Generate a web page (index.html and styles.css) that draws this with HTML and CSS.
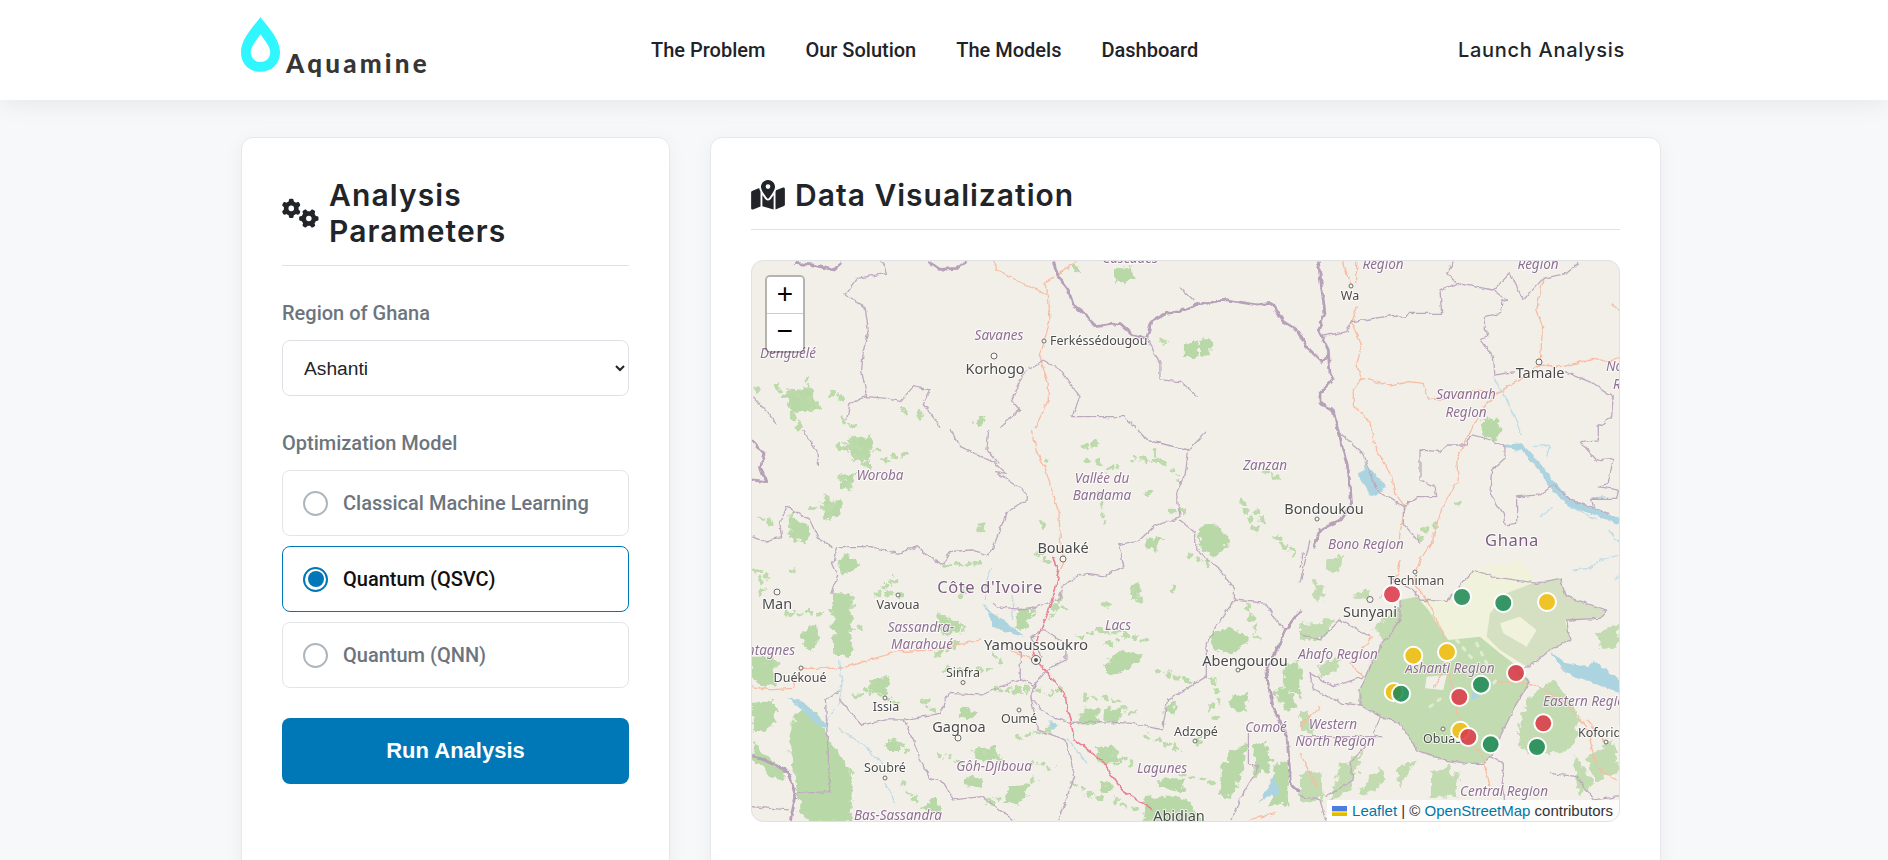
FILE: index.html
```html
<!DOCTYPE html>
<html lang="en">
<head>
<meta charset="utf-8">
<title>Aquamine</title>
<link rel="stylesheet" href="styles.css">
</head>
<body>
<header class="navbar">
  <a class="logo" href="#">
    <svg class="logo-drop" viewBox="0 0 42 58" aria-hidden="true"><path fill-rule="evenodd" d="M21 .3C27 9 41 22 41 36.5 41 48.5 32.5 56.5 21 56.5S1 48.5 1 36.5C1 22 15 9 21 .3ZM21 18C17 24 11 30.500 11 36.500 11 42 15 46.500 21 46.500S31 42 31 36.500C31 30.500 25 24 21 18Z"/></svg>
    <span class="logo-text">Aquamine</span>
  </a>
  <nav class="nav-links">
    <a href="#">The Problem</a>
    <a href="#">Our Solution</a>
    <a href="#">The Models</a>
    <a href="#">Dashboard</a>
  </nav>
  <a class="nav-cta" href="#">Launch Analysis</a>
</header>

<main class="layout">
  <section class="card">
    <h2 class="card-title">
      <svg class="icon-gears" viewBox="0 0 640 512" aria-hidden="true"><path d="M308.5 135.3c7.1-6.3 9.9-16.2 6.2-25c-2.3-5.3-4.8-10.5-7.6-15.5L304 89.4c-3-5-6.3-9.9-9.8-14.6c-5.7-7.6-15.7-10.1-24.7-7.1l-28.2 9.3c-10.7-8.8-23-16-36.2-20.9L199 27.1c-1.9-9.3-9.1-16.7-18.500-17.800C173.900 8.400 167.200 8 160.400 8h-.7c-6.800 0-13.500 .4-20.100 1.200c-9.400 1.100-16.600 8.600-18.500 17.800L115 56.100c-13.300 5-25.500 12.100-36.200 20.900L50.500 67.800c-9-3-19-.5-24.700 7.100c-3.500 4.700-6.800 9.600-9.900 14.600l-3 5.300c-2.800 5-5.300 10.200-7.600 15.600c-3.700 8.700-.9 18.600 6.200 25l22.200 19.800C32.600 161.900 32 168.900 32 176s.6 14.100 1.700 20.900L11.500 216.700c-7.100 6.300-9.900 16.200-6.200 25c2.300 5.300 4.800 10.500 7.600 15.600l3 5.200c3 5.100 6.300 9.900 9.900 14.600c5.700 7.600 15.700 10.100 24.700 7.100l28.200-9.300c10.700 8.800 23 16 36.200 20.900l6.100 29.100c1.900 9.300 9.100 16.700 18.500 17.800c6.700 .8 13.500 1.200 20.400 1.200s13.700-.4 20.400-1.200c9.400-1.100 16.600-8.600 18.500-17.800l6.100-29.100c13.300-5 25.500-12.100 36.200-20.900l28.200 9.300c9 3 19 .5 24.700-7.100c3.500-4.700 6.800-9.500 9.800-14.600l3.100-5.400c2.800-5 5.300-10.200 7.600-15.500c3.700-8.700 .9-18.600-6.200-25l-22.200-19.800c1.100-6.800 1.700-13.800 1.700-20.900s-.6-14.100-1.700-20.900l22.200-19.800zM112 176a48 48 0 1 1 96 0 48 48 0 1 1 -96 0zM504.700 500.500c6.300 7.100 16.200 9.900 25 6.200c5.300-2.300 10.500-4.800 15.500-7.600l5.400-3.100c5-3 9.900-6.300 14.600-9.800c7.600-5.700 10.100-15.700 7.100-24.700l-9.300-28.200c8.800-10.700 16-23 20.900-36.200l29.100-6.100c9.300-1.900 16.700-9.100 17.800-18.500c.8-6.700 1.200-13.500 1.200-20.400s-.4-13.700-1.200-20.400c-1.100-9.400-8.600-16.600-17.800-18.500L583.900 307c-5-13.300-12.100-25.500-20.900-36.200l9.300-28.200c3-9 .5-19-7.100-24.700c-4.700-3.500-9.600-6.800-14.600-9.900l-5.300-3c-5-2.800-10.200-5.300-15.600-7.600c-8.700-3.700-18.600-.9-25 6.200l-19.800 22.200c-6.800-1.100-13.800-1.700-20.900-1.700s-14.100 .6-20.900 1.700l-19.800-22.200c-6.300-7.100-16.200-9.900-25-6.200c-5.300 2.300-10.500 4.800-15.600 7.600l-5.200 3c-5.100 3-9.900 6.300-14.600 9.900c-7.600 5.700-10.100 15.700-7.100 24.700l9.300 28.200c-8.800 10.700-16 23-20.900 36.200L315.100 313c-9.300 1.900-16.700 9.100-17.800 18.500c-.8 6.700-1.200 13.500-1.200 20.400s.4 13.700 1.200 20.400c1.100 9.400 8.600 16.600 17.800 18.500l29.100 6.100c5 13.300 12.100 25.500 20.900 36.200l-9.300 28.200c-3 9-.5 19 7.100 24.700c4.700 3.500 9.500 6.800 14.600 9.800l5.400 3.100c5 2.800 10.200 5.300 15.500 7.600c8.700 3.700 18.600 .9 25-6.200l19.800-22.200c6.800 1.100 13.800 1.700 20.900 1.700s14.100-.6 20.900-1.700l19.800 22.200zM464 304a48 48 0 1 1 0 96 48 48 0 1 1 0-96z"/></svg>
      <span class="title-narrow">Analysis Parameters</span>
    </h2>

    <label class="field-label" for="region">Region of Ghana</label>
    <select class="field-select" id="region">
      <option>Ashanti</option>
      <option>Bono</option>
      <option>Eastern</option>
    </select>

    <p class="field-label field-label-model">Optimization Model</p>
    <div class="options">
      <div class="option"><span class="radio"></span>Classical Machine Learning</div>
      <div class="option option-active"><span class="radio"></span>Quantum (QSVC)</div>
      <div class="option"><span class="radio"></span>Quantum (QNN)</div>
    </div>

    <button class="run-button" type="button">Run Analysis</button>
  </section>

  <section class="card">
    <h2 class="card-title card-title-wide">
      <svg class="icon-map" viewBox="0 0 576 512" aria-hidden="true"><path d="M408 120c0 54.600-73.100 151.900-105.200 192c-7.700 9.600-22 9.600-29.600 0C241.100 271.900 168 174.600 168 120C168 53.700 221.700 0 288 0s120 53.700 120 120zm8 80.400c3.500-6.900 6.700-13.800 9.600-20.600c.5-1.200 1-2.500 1.500-3.700l116-46.400C558.900 123.400 576 135 576 152V422.800c0 9.800-6 18.600-15.100 22.300L416 503V200.400zM137.600 138.300c2.400 14.100 7.200 28.300 12.800 41.500c2.900 6.800 6.100 13.700 9.600 20.600V451.800L32.900 502.700C17.100 509 0 497.400 0 480.400V209.600c0-9.800 6-18.600 15.100-22.300l122.600-49zM327.800 332c13.900-17.400 35.700-45.700 56.200-77V504.300L192 449.400V255c20.500 31.300 42.300 59.600 56.200 77c20.500 25.600 59.100 25.600 79.600 0zM288 152a40 40 0 1 0 0-80 40 40 0 1 0 0 80z"/></svg>
      <span>Data Visualization</span>
    </h2>

    <div class="map">
      <svg class="map-canvas" viewBox="751 260 869 562" aria-label="Map of Ghana and Côte d'Ivoire">
        <defs>
          <filter id="rough" x="-5%" y="-5%" width="110%" height="110%" color-interpolation-filters="sRGB">
            <feTurbulence type="fractalNoise" baseFrequency=".045" numOctaves="3" seed="4"/>
            <feDisplacementMap in="SourceGraphic" scale="34" xChannelSelector="R" yChannelSelector="G"/>
          </filter>
          <filter id="wiggle" x="-5%" y="-5%" width="110%" height="110%" color-interpolation-filters="sRGB">
            <feTurbulence type="fractalNoise" baseFrequency=".05" numOctaves="2" seed="9"/>
            <feDisplacementMap in="SourceGraphic" scale="14" xChannelSelector="R" yChannelSelector="G"/>
          </filter>
        </defs>
        <g class="tiles">
          <!-- Côte d'Ivoire, central and south -->
          <g transform="translate(750 430) scale(.351 .3333)">
            <path class="forest" d="M232 490H290V672H240ZM115 900C120 860 150 830 175 840C210 860 215 900 228 935L290 1020V1180H160L135 1090 115 960ZM5 680H70V770L40 775 5 745ZM5 812H65L78 880 40 905 5 900ZM5 930L60 990 105 1020 95 1060 5 990ZM150 610L180 582 200 620 180 665 145 640ZM1390 950L1420 945 1405 1030 1370 1105 1335 1095 1350 1000ZM1430 945L1470 935 1485 1010 1440 1045ZM1165 1045L1240 1050 1230 1085 1165 1075ZM1310 620C1330 590 1390 590 1420 620L1390 670 1330 665ZM1290 290C1330 275 1365 310 1360 350L1320 380 1280 350ZM1010 700L1060 660 1120 680 1060 730 1020 735ZM1525 700L1568 690V800L1520 770ZM1495 790L1530 755 1558 830 1530 850ZM1365 800L1420 790 1410 850 1365 830ZM960 830L1000 835 990 880 930 880ZM1020 830L1060 840 1050 880 1005 870ZM640 960L700 945 720 1000 640 990ZM740 1075L800 1060 770 1120 720 1125ZM500 1120L530 1095 540 1150 480 1140ZM610 1045L660 1045 650 1070 605 1065ZM980 945L1040 950 1055 1000 1000 1000ZM380 940L440 935 425 960 390 960ZM110 260L170 285 160 340 115 330ZM270 370L310 400 280 435 250 420ZM530 550L590 570 600 610 540 610ZM760 545L810 530 790 600 760 590ZM1130 330L1180 320 1160 360 1125 355ZM345 745L400 745 385 790 340 775ZM1130 1100L1240 1100 1290 1180H1120ZM1190 820L1210 815 1210 850 1175 850ZM1080 470L1110 450 1110 505 1085 510ZM620 830L650 850 620 870 590 850ZM280 20L350 25 340 95 290 90ZM250 45L290 50 280 70ZM210 215L265 210 250 260 215 265ZM265 135L300 130 290 175 265 175ZM1500 1000L1540 1000 1530 1130 1480 1120ZM1000 1060H1030V1085H1000Z"/>
            <path class="speck" d="M280 30L340 110M300 20L300 90M250 50L370 60M380 90L450 70M260 140L300 180M180 230L260 220M220 200L230 270M120 250L110 310M950 50L990 40M1020 120L1050 110M1130 190L1150 210M1210 120L1230 170M1200 240L1240 240M1150 60L1170 110M1090 80L1190 100M300 800L350 760M340 780L420 820M520 840L480 800M430 500L380 480M550 560L620 600M590 640L520 680M720 700L680 660M700 780L830 780M850 790L900 770M880 500L900 550M860 560L880 500M1000 600L930 620M1020 640L1050 630M1090 480L1120 520M1200 480L1220 460M1010 520L1020 530M1320 750L1340 820M1310 830L1340 880M1130 920L1220 960M1300 900L1270 950M1090 1000L1020 970M950 800L1040 810M400 930L450 960M540 970L600 1000M640 960L720 990M760 920L860 900M780 1070L820 1040M920 1060L1000 1110M1060 830L1100 860M560 720L680 720M560 410L650 400M410 450L350 500M120 420L130 430M1400 210L1440 300M1250 370L1300 400M830 280L850 300M660 290L670 310M30 260L70 290M20 420L60 450M110 550L220 550M310 590L330 600M650 300L670 320M840 90L860 110M960 90L1000 100M1000 190L1010 280M820 370L860 400M600 500L640 470M700 560L720 600M1130 630L1000 600M1160 720L1260 760M1420 530L1450 640M1440 110L1500 140M1500 320L1560 380M1440 240L1470 290M40 700L80 700M30 450L35 500M1230 1030L1320 1060M430 1060L470 1110M1040 1110L1100 1140M800 1000L860 1010M680 1120L720 1100"/>
            <path class="road" d="M805 0L815 60 840 110 880 250 885 340 895 395 880 430M145 715L260 715 420 665 520 660 660 630M5 770L60 780 120 775 145 715M740 660L810 690M1420 1170L1500 1150M1190 1150L1230 1170"/>
            <path class="trunk" d="M862 380L880 430 860 520 805 660 815 690 895 790 925 930 1000 990 1060 1080 1150 1140"/>
            <path class="water" d="M660 518L690 550 735 580 780 620 748 612 690 590 680 548ZM105 800L150 815 215 880 255 815 270 800 230 850 220 895 190 885 145 835ZM1452 1120L1490 1040 1510 1090 1475 1100ZM850 870L880 885 860 900Z"/>
            <path class="river" d="M690 410L675 450 670 510M750 495L745 570M255 690L262 760 255 810M385 1055L395 1075 415 1120M250 895L330 950 400 1030M905 925L960 1000"/>
            <path class="admin" d="M570 0L600 50 700 100 730 130 700 125 790 190 790 210 730 250 690 360 680 375 630 360 570 365 550 405 510 380 480 350 420 370 345 350 250 350 235 400 250 435 230 495M680 0L675 60 710 100M5 320L40 335 90 320 85 280 105 230 170 270 195 325 235 350M1105 0L1130 30 1250 60 1300 5M1250 60L1240 130 1215 190 1225 260 1150 290 1110 330 1050 345 1065 410 1005 440 940 430 890 470 880 510 790 540 700 530 690 520M1225 270L1270 310 1270 360 1340 420 1380 480 1380 510 1470 520 1500 570 1525 600M1380 510L1340 570 1300 640 1300 740 1190 810 1175 900 1090 880 1000 875 920 880 870 865 830 840 800 800 810 765 770 745 660 795 565 790 540 850 440 870 390 870 320 885 255 810M800 800L820 900 900 930 925 1040 880 1170M1420 910L1420 1000 1450 1010 1400 1100 1370 1170M440 870L490 1000 510 1045 550 1055 580 1110 660 1100 750 1170M770 745L770 665 740 650M830 680L800 620 840 600 900 640 900 690 850 715 830 740 810 765M135 1090L228 1085 215 810 255 780M150 0L190 60 195 105M5 1130L110 1140"/>
            <path class="border" d="M5 30L40 70 30 110 45 155 5 150M5 980L40 990 110 1025 130 1100 115 1170M1525 600L1470 730 1490 830 1530 920 1540 1060 1568 1090M1525 600L1568 540"/>
          </g>

          <!-- Top left -->
          <g transform="translate(700 130) scale(.3333)">
            <path class="forest" d="M1240 415L1295 410 1305 450 1250 460ZM1455 640H1500V678H1455ZM1115 410L1145 400 1140 425 1120 432ZM830 860L855 860 845 890 825 880ZM250 790L340 770 350 830 280 850Z"/>
            <path class="speck" d="M320 745L330 840M230 770L290 860M270 780L360 830M280 860L300 900M170 770L180 790M430 870L470 890M390 790L420 800M610 840L620 850M660 850L665 870M1380 630L1395 645"/>
            <path class="road" d="M885 395L890 420 980 465 1045 495 1050 570 1020 680 1045 760 1045 810 1005 895M1045 495L1035 460 1130 395"/>
            <path class="admin" d="M545 395L560 430 470 445 435 495 495 530 505 600 490 660 485 720 500 800 450 820 440 870M500 800L560 805 600 815 640 770 690 780 670 820 720 890M160 800L230 880M1030 690L970 730 935 810 960 840 900 890M1030 690L1080 720 1140 800 1115 860 1270 860 1310 895M1440 470L1480 510M1340 625L1380 700 1380 750 1440 755 1490 800"/>
            <path class="border" d="M1060 395L1075 440 1105 480 1120 525 1165 560 1185 590 1260 580 1300 615 1340 625 1355 575 1400 550 1440 545 1500 520M285 400L340 405 400 420 425 400M685 395L720 418 770 415 800 395"/>
          </g>

          <!-- Top right -->
          <g transform="translate(1200 250) scale(.3333)">
            <path class="forest" d="M0 268H32L35 312 0 315ZM845 510L900 505 905 545 880 575 850 560ZM0 830L40 820 90 870 60 900H0Z"/>
            <path class="speck" d="M670 840L710 825M770 760L790 770M660 860L670 880"/>
            <path class="road" d="M430 35L450 105M470 35L470 100M470 170L455 220 485 285 470 345 485 385 575 408 625 395 670 400 685 445 710 450 830 420 890 430 950 395 1020 345 1090 350 1180 325 1225 335 1260 325M485 385L460 420 460 465 510 520 525 590 575 680 585 730 615 770 600 850 595 895M1020 345L1028 230 1010 180 1030 85M1235 160L1260 185M890 430L860 460 810 545 770 630 775 690 725 775 690 895"/>
            <path class="water" d="M905 585L965 580 1020 640 1060 690 1110 750 1170 770 1260 805V825L1170 790 1110 772 1050 715 1020 662 965 600 915 595ZM490 630L540 690 560 710 515 740 470 670 495 660Z"/>
            <path class="river" d="M1000 590L1050 585 1040 620M880 380L930 470 965 555M1060 770L1020 800M1115 770L1190 810M1170 745L1215 740M1225 840L1260 880"/>
            <path class="admin" d="M370 258L440 245 455 215 590 195 615 205 625 190 725 190 720 120 770 100 880 120 925 155 905 150 905 190 850 200 860 260 840 265 880 320 885 375 945 365M1030 85L970 150 945 100 930 70 880 120M1030 85L1100 70 1135 40M760 35L740 70 770 100M1095 365L1180 400 1240 440 1235 500 1195 530 1195 570 1140 575 1190 630 1240 625 1225 700 1195 710 1255 720 1250 745 1175 745 1180 770M415 545L490 610 530 720 610 770 650 740 710 740 705 710 660 690 660 600 720 605 740 585 800 585 815 555 860 565 915 590 915 625 875 660 870 730 910 790 915 825 950 820 950 740 1020 735 1060 705 1110 750 1170 770 1225 790M610 770L610 820 660 880"/>
            <path class="border" d="M0 165L70 148 170 165 215 160 250 215 290 240 320 290 365 335 385 315M355 35L375 190 355 240 385 300 390 370 400 390 360 430 360 460 400 480 415 545 445 660 455 760 420 810 360 840 340 895"/>
          </g>

          <!-- Ghana, Ashanti and Bono East -->
          <g transform="translate(1300 540) scale(.3333)">
            <path class="forest-pale" d="M350 170L440 180 520 90 660 60 710 130 780 115 800 170 920 210 900 235 800 240 810 300 750 330 690 380 650 385 540 290 445 300 430 280 385 210Z"/>
            <path class="forest-mid" d="M570 220L620 160 710 125 780 115 800 170 920 210 905 235 795 240 812 300 745 335 680 380 600 330 560 290ZM600 250L660 230 710 270 680 320 610 280Z" fill-rule="evenodd"/>
            <path class="forest-soft" d="M300 180L350 170 385 210 430 280 445 300 540 290 600 340 660 385 690 425 640 510 610 570 600 590 580 640 550 670 500 670 430 660 350 630 300 550 245 530 180 495 180 450 200 400 240 320 300 240ZM380 410L440 405 430 450 375 445Z" fill-rule="evenodd"/>
            <path class="forest-soft forest-irregular" d="M680 480L760 420 830 500 830 600 790 640 680 640 650 590ZM0 250L70 245 110 235 60 300 0 300ZM75 60L130 45 110 100 80 95ZM120 680L190 640 150 750 90 780ZM290 690L350 660 300 740ZM0 705L60 690 70 780 0 790ZM180 750L240 680 260 720 195 770ZM390 700L450 680 470 770 390 770ZM860 650L940 600 960 700 880 720ZM660 590L720 600 700 640 650 620ZM820 640L880 730 840 770ZM0 520L30 510 40 580 0 570ZM220 260L320 190 300 260 250 310ZM50 380L130 350 100 400 60 410ZM40 120L70 140 60 190 40 170ZM160 170L210 140 200 180ZM420 720L480 700 460 770ZM890 280L960 250 950 320 900 320Z"/>
            <path class="speck-light" d="M470 300L520 360M530 310L560 370M560 450L590 420M390 500L430 470"/>
            <path class="road" d="M400 0L360 60 340 130 380 180 430 280 445 390 475 520 500 600 545 640 570 740M300 60L295 100 240 175M215 290L200 310 150 370 190 410M60 500L0 560M0 640L50 740M590 425L700 432 800 490 860 560 890 680 950 720M400 440L430 400M920 610L860 540"/>
            <path class="water" d="M750 335L800 370 860 380 880 360 960 420V460L880 430 800 400ZM515 450L540 470 515 480Z"/>
            <path class="river" d="M820 90L870 85 900 60 960 45M945 120L960 105"/>
            <path class="admin" d="M30 0L0 130M0 85L10 40M260 110L340 150 360 180 440 185 520 90 580 110 710 130 780 115 800 170 920 210 900 235 800 240 810 300 750 330 690 380 640 385 690 425 640 510 610 570 600 590 580 640 550 670 500 670 430 660 350 630 300 550 245 530 180 495 180 450 200 400 240 320 300 240 300 180M210 290L120 240 60 300 0 280M190 410L100 440 30 400 40 450 130 490 180 495M240 530L220 590 150 670 160 720 80 770M0 590L250 590M0 770L60 780 80 850M570 650L610 670 610 780M830 710L880 780 960 770M750 700L830 710"/>
          </g>
        </g>

        <g class="labels">
          <text class="region" x="1130" y="263">Cascades</text>
          <text class="region" x="999" y="340">Savanes</text>
          <text class="town start" x="1050" y="345">Ferkéssédougou</text>
          <text class="city" x="995" y="374">Korhogo</text>
          <text class="region" x="788" y="358">Denguélé</text>
          <text class="region" x="1383" y="269">Region</text>
          <text class="region" x="1538" y="269">Region</text>
          <text class="town" x="1350" y="300">Wa</text>
          <text class="region" x="1466" y="399">Savannah</text>
          <text class="region" x="1466" y="417">Region</text>
          <text class="city" x="1540" y="378">Tamale</text>
          <text class="region" x="1265" y="470">Zanzan</text>
          <text class="town-large" x="1324" y="514">Bondoukou</text>
          <text class="region" x="1366" y="549">Bono Region</text>
          <text class="country" x="1512" y="546">Ghana</text>
          <text class="region start" x="1606" y="371">Northern</text>
          <text class="region start" x="1613" y="389">Region</text>
          <text class="town" x="1416" y="585">Techiman</text>
          <text class="city" x="1370" y="617">Sunyani</text>
          <text class="region" x="1338" y="659">Ahafo Region</text>
          <text class="region" x="1450" y="673">Ashanti Region</text>
          <text class="region start" x="1543" y="706">Eastern Region</text>
          <text class="region" x="1333" y="729">Western</text>
          <text class="region" x="1335" y="746">North Region</text>
          <text class="town start" x="1578" y="737">Koforidua</text>
          <text class="town start" x="1423" y="743">Obuasi</text>
          <text class="region" x="1504" y="796">Central Region</text>
          <text class="region" x="880" y="480">Woroba</text>
          <text class="region" x="1102" y="483">Vallée du</text>
          <text class="region" x="1102" y="500">Bandama</text>
          <text class="city" x="1063" y="553">Bouaké</text>
          <text class="country" x="990" y="593">Côte d'Ivoire</text>
          <text class="city" x="777" y="609">Man</text>
          <text class="town" x="898" y="609">Vavoua</text>
          <text class="region" x="921" y="632">Sassandra-</text>
          <text class="region" x="922" y="649">Marahoué</text>
          <text class="region" x="1118" y="630">Lacs</text>
          <text class="city city-wide" x="1036" y="650">Yamoussoukro</text>
          <text class="region end" x="795" y="655">Montagnes</text>
          <text class="town" x="800" y="682">Duékoué</text>
          <text class="town" x="963" y="677">Sinfra</text>
          <text class="town" x="886" y="711">Issia</text>
          <text class="town-large" x="1245" y="666">Abengourou</text>
          <text class="city" x="959" y="732">Gagnoa</text>
          <text class="town" x="1019" y="723">Oumé</text>
          <text class="town" x="1196" y="736">Adzopé</text>
          <text class="region" x="1266" y="732">Comoé</text>
          <text class="town" x="885" y="772">Soubré</text>
          <text class="region" x="994" y="771">Gôh-Djiboua</text>
          <text class="region" x="1162" y="773">Lagunes</text>
          <text class="region" x="898" y="820">Bas-Sassandra</text>
          <text class="city" x="1179" y="821">Abidjan</text>
        </g>

        <g class="dots">
          <circle cx="1044" cy="341" r="2"/><circle cx="994" cy="356" r="3"/><circle cx="1351" cy="286" r="2"/>
          <circle cx="1539" cy="362" r="3"/><circle cx="1317" cy="519" r="2"/><circle cx="1415" cy="572" r="2"/>
          <circle cx="1370" cy="599.500" r="3"/><circle cx="1606" cy="742" r="2"/><circle cx="1443" cy="729" r="2"/>
          <circle cx="1063" cy="559" r="3"/><circle cx="777" cy="592" r="3"/><circle cx="898" cy="595" r="2"/>
          <circle cx="801" cy="668" r="2"/><circle cx="963" cy="682.500" r="2"/><circle cx="885" cy="698" r="2"/>
          <circle cx="1238" cy="670" r="2"/><circle cx="958" cy="738" r="3"/><circle cx="1019" cy="710" r="2"/>
          <circle cx="1195" cy="741" r="2"/><circle cx="885" cy="778" r="2"/>
          <circle cx="1036" cy="660" r="4.500"/><circle class="dot-core" cx="1036" cy="660" r="2"/>
        </g>

        <g class="markers">
          <circle class="mk-red" cx="1392" cy="594.300" r="9"/>
          <circle class="mk-green" cx="1462" cy="597" r="9"/>
          <circle class="mk-green" cx="1503.300" cy="603" r="9"/>
          <circle class="mk-yellow" cx="1547" cy="602" r="9"/>
          <circle class="mk-yellow" cx="1413.300" cy="655.700" r="9"/>
          <circle class="mk-yellow" cx="1447" cy="652" r="9"/>
          <circle class="mk-red" cx="1516" cy="673" r="9"/>
          <circle class="mk-green" cx="1481" cy="684.700" r="9"/>
          <circle class="mk-red" cx="1459.300" cy="697" r="9"/>
          <circle class="mk-yellow" cx="1393.700" cy="692" r="9"/>
          <circle class="mk-green" cx="1401" cy="693.700" r="9"/>
          <circle class="mk-yellow" cx="1460.300" cy="730.700" r="9"/>
          <circle class="mk-red" cx="1468.300" cy="737" r="9"/>
          <circle class="mk-green" cx="1490.700" cy="744.300" r="9"/>
          <circle class="mk-red" cx="1543.300" cy="723.300" r="9"/>
          <circle class="mk-green" cx="1537" cy="747" r="9"/>
        </g>
      </svg>

      <div class="zoom-control">
        <a class="zoom-btn" href="#">+</a>
        <a class="zoom-btn" href="#">−</a>
      </div>

      <div class="attribution"><svg class="flag" viewBox="0 0 12 8" aria-hidden="true"><path class="flag-top" d="M0 0H12V4H0Z"/><path class="flag-mid" d="M0 4H12V5.500H0Z"/><path class="flag-low" d="M0 5.500H12V8H0Z"/></svg> <a href="#">Leaflet</a> | © <a href="#">OpenStreetMap</a> contributors</div>
    </div>
  </section>
</main>
</body>
</html>
```
FILE: styles.css
```css
* { box-sizing: border-box; }

html, body {
  margin: 0;
  height: 100%;
  overflow: hidden;
}

body {
  background: #f7f8fa;
  color: #212529;
  font-family: Roboto, "Liberation Sans", sans-serif;
}

a { text-decoration: none; color: inherit; }

/* Navbar */
.navbar {
  position: relative;
  z-index: 2;
  display: flex;
  align-items: center;
  height: 100px;
  padding: 0 263px 0 240px;
  background: #fff;
  box-shadow: 0 4px 24px rgba(0, 0, 0, .07);
}

.logo {
  display: flex;
  align-items: flex-end;
  gap: 5px;
  width: 188px;
  height: 58px;
  margin-top: -11px;
}

.logo-drop {
  display: block;
  width: 41px;
  height: 58px;
  fill: #30f6ff;
  flex: none;
}

.logo-text {
  margin-bottom: -4px;
  font-family: Lato, "Noto Sans", sans-serif;
  font-weight: 900;
  font-size: 26px;
  line-height: 30px;
  letter-spacing: 3.200px;
  color: #363636;
}

.nav-links {
  display: flex;
  gap: 40px;
  margin-left: 223px;
  font-size: 20px;
  font-weight: 500;
  color: #1f2327;
}

.nav-cta {
  margin-left: auto;
  font-family: Inter, Roboto, sans-serif;
  font-size: 20px;
  font-weight: 500;
  letter-spacing: .7px;
}

/* Page */
.layout {
  display: grid;
  grid-template-columns: 429px 951px;
  column-gap: 40px;
  padding: 37px 0 0 241px;
}

.card {
  height: 900px;
  padding: 39px 40px;
  background: #fff;
  border: 1px solid #e6e8eb;
  border-radius: 12px;
  box-shadow: 0 4px 20px rgba(0, 0, 0, .05);
}

.card-title {
  display: flex;
  align-items: center;
  gap: 10px;
  margin: 0 0 34px;
  padding-bottom: 16px;
  border-bottom: 1px solid #dee2e6;
  font-family: Inter, "Open Sans", sans-serif;
  font-size: 30px;
  font-weight: 600;
  line-height: 36px;
  letter-spacing: 1px;
  color: #212529;
}

.card-title-wide { margin-bottom: 30px; }

.title-narrow { max-width: 220px; letter-spacing: 1.100px; }

.icon-gears { width: 37px; height: 30px; fill: #212529; flex: none; }
.icon-map { width: 34px; height: 30px; fill: #212529; flex: none; }

.field-label {
  display: block;
  margin: 0 0 14px;
  font-size: 20px;
  font-weight: 500;
  line-height: 26px;
  color: #6c757d;
}

.field-label-model { margin-top: 34px; }

.field-select {
  display: block;
  width: 100%;
  height: 56px;
  padding: 0 17px;
  background: #fff;
  border: 1px solid #dee2e6;
  border-radius: 8px;
  font-family: "Liberation Sans", Arial, sans-serif;
  font-size: 19.200px;
  color: #212529;
}

.options {
  display: flex;
  flex-direction: column;
  gap: 10px;
}

.option {
  display: flex;
  align-items: center;
  gap: 15px;
  height: 66px;
  padding: 0 20px;
  background: #fff;
  border: 1px solid #e2e5e8;
  border-radius: 8px;
  font-size: 20px;
  font-weight: 500;
  color: #6c757d;
}

.radio {
  position: relative;
  width: 25px;
  height: 25px;
  border: 2px solid #adb5bd;
  border-radius: 50%;
  background: #fff;
  flex: none;
}

.option-active {
  border-color: #0077b6;
  color: #111;
}

.option-active .radio { border-color: #0077b6; }

.option-active .radio::after {
  content: "";
  position: absolute;
  inset: 2.500px;
  border-radius: 50%;
  background: #0077b6;
}

.run-button {
  display: block;
  width: 100%;
  height: 66px;
  margin-top: 30px;
  padding: 0;
  background: #0077b6;
  border: 0;
  border-radius: 8px;
  color: #fff;
  font-family: "Liberation Sans", Arial, sans-serif;
  font-size: 22px;
  font-weight: 700;
}

/* Map */
.map {
  position: relative;
  height: 562px;
  overflow: hidden;
  background: #f2efe9;
  border: 1px solid #dfe1e4;
  border-radius: 12px;
}

.map-canvas {
  position: absolute;
  inset: -1px;
  display: block;
  width: 869px;
  height: 562px;
}

.tiles path { fill: none; vector-effect: non-scaling-stroke; stroke-linejoin: round; }

.tiles .forest { fill: #b9d8a8; filter: url(#rough); }
.tiles .forest-pale { fill: #f0f2dc; }
.tiles .forest-mid { fill: #d5e0c2; }
.tiles .forest-soft { fill: #c3dbb0; }
.tiles .forest-irregular { filter: url(#rough); }

.tiles .speck {
  stroke: #bcdaaa;
  stroke-width: 4.500px;
  stroke-linecap: round;
  stroke-dasharray: 3 7;
  filter: url(#rough);
}

.tiles .speck-light {
  stroke: #e0ecd2;
  stroke-width: 3px;
  stroke-linecap: round;
  stroke-dasharray: 3 7;
}

.tiles .road { stroke: #f6bda3; stroke-width: 1.300px; filter: url(#wiggle); }
.tiles .trunk { stroke: #ea7f92; stroke-width: 1.600px; filter: url(#wiggle); }
.tiles .water { fill: #acd4e0; filter: url(#wiggle); }
.tiles .river { stroke: #bcdbe5; stroke-width: 1.200px; filter: url(#wiggle); }
.tiles .admin { stroke: #bda9be; stroke-width: 1.300px; filter: url(#wiggle); }
.tiles .border { stroke: #b7a1b9; stroke-width: 2.800px; filter: url(#wiggle); }

.labels { filter: blur(.3px); }

.labels text {
  font-family: "Noto Sans", "Open Sans", sans-serif;
  text-anchor: middle;
  paint-order: stroke;
  stroke: rgba(255, 255, 255, .75);
  stroke-width: 2px;
  stroke-linejoin: round;
}

.labels .start { text-anchor: start; }
.labels .end { text-anchor: end; }

.labels .city { font-size: 14.500px; fill: #4a4a4a; }
.labels .city-wide { font-size: 15px; }
.labels .town { font-size: 12.500px; fill: #4a4a4a; }
.labels .town-large { font-size: 14.500px; fill: #4a4a4a; }
.labels .region { font-size: 13.500px; font-style: italic; fill: #8f6f92; }
.labels .country { font-size: 16.500px; fill: #7c5d80; letter-spacing: .6px; }

.dots circle {
  fill: #f8f6f2;
  stroke: #6e6e6e;
  stroke-width: 1px;
}

.dots .dot-core { fill: #555; stroke: none; }

.markers circle {
  stroke: #fff;
  stroke-width: 2px;
  fill-opacity: .85;
}

.markers .mk-red { fill: #dc3545; }
.markers .mk-green { fill: #198754; }
.markers .mk-yellow { fill: #f5bd0d; }

.zoom-control {
  position: absolute;
  top: 14px;
  left: 13px;
  width: 40px;
  border: 2px solid rgba(0, 0, 0, .25);
  border-radius: 5px;
  background-clip: padding-box;
}

.zoom-btn {
  display: block;
  height: 37px;
  background: #fff;
  color: #000;
  font-family: "Liberation Mono", monospace;
  font-size: 28px;
  font-weight: 400;
  line-height: 37px;
  text-align: center;
}

.zoom-btn:first-child {
  border-bottom: 1px solid #ccc;
  border-radius: 3px 3px 0 0;
}

.zoom-btn:last-child { border-radius: 0 0 3px 3px; }

.attribution {
  position: absolute;
  right: -1px;
  bottom: -1px;
  height: 22px;
  padding: 0 7px 0 5px;
  background: rgba(255, 255, 255, .8);
  font-family: "Liberation Sans", Arial, sans-serif;
  font-size: 15px;
  line-height: 22px;
  color: #333;
  white-space: nowrap;
}

.attribution a { color: #0078a8; }

.flag { display: inline-block; width: 15px; height: 10px; margin-right: 1px; }
.flag-top { fill: #4c7be1; }
.flag-mid { fill: #ffd500; }
.flag-low { fill: #e0bc00; }
```
